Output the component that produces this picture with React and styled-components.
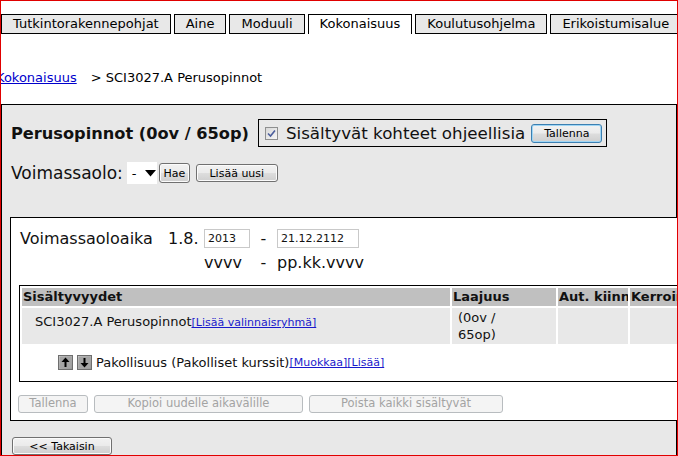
import React from "react";
import styled, { createGlobalStyle } from "styled-components";

const GlobalStyle = createGlobalStyle`
  html, body {
    margin: 0;
    padding: 0;
    background: #fff;
  }
  body {
    font-family: "DejaVu Sans", Verdana, sans-serif;
    color: #000;
  }
  * {
    box-sizing: border-box;
  }
`;

const tabs = [
  "Tutkintorakennepohjat",
  "Aine",
  "Moduuli",
  "Kokonaisuus",
  "Koulutusohjelma",
  "Erikoistumisalue",
];

const Frame = styled.div`
  width: 678px;
  height: 456px;
  border: 1px solid #e00000;
  overflow: hidden;
  background: #fff;
`;

const TabBar = styled.div`
  display: flex;
  gap: 3px;
  margin-top: 13px;
  white-space: nowrap;
`;

const Tab = styled.div`
  flex: none;
  height: 20px;
  padding: 0 11px;
  border: 1px solid #000;
  border-bottom: ${(p) => (p.$active ? "none" : "1px solid #000")};
  background: ${(p) => (p.$active ? "#fff" : "#e8e8e8")};
  font-size: 13px;
  line-height: 18px;
`;

const Breadcrumb = styled.div`
  margin: 36px 0 0 -5px;
  font-size: 13px;
  line-height: 16px;
  white-space: nowrap;
`;

const CrumbLink = styled.a`
  color: #0000cc;
  text-decoration: underline;
`;

const CrumbCurrent = styled.span`
  margin-left: 14px;
`;

const Panel = styled.div`
  margin-top: 18px;
  height: 420px;
  border: 1px solid #000;
  background: #e8e8e8;
  padding: 14px 0 0 8px;
`;

const TitleRow = styled.div`
  display: flex;
  align-items: center;
  gap: 9px;
  padding-left: 1px;
  white-space: nowrap;
`;

const Title = styled.div`
  font-size: 16.2px;
  font-weight: bold;
  color: #111;
`;

const OptionBox = styled.div`
  display: flex;
  align-items: center;
  height: 28px;
  border: 1px solid #000;
  padding: 0 4px 0 6px;
`;

const CheckBox = styled.span`
  display: inline-flex;
  width: 13px;
  height: 13px;
  margin-right: 8px;
  border: 1px solid #8e8f8f;
  background: linear-gradient(135deg, #d8d8d8, #f6f6f6);
  align-items: center;
  justify-content: center;
`;

const OptionLabel = styled.span`
  font-size: 16.7px;
  color: #111;
  margin-right: 6px;
`;

const Button = styled.button`
  width: ${(p) => p.$w}px;
  height: ${(p) => p.$h || 18}px;
  margin: 0;
  padding: 0;
  font-family: "DejaVu Sans", Verdana, sans-serif;
  font-size: ${(p) => p.$size || 11}px;
  color: #000;
  border: 1px solid ${(p) => (p.$focus ? "#3c7fb1" : "#707070")};
  border-radius: 3px;
  box-shadow: ${(p) =>
    p.$focus ? "inset 0 0 0 1px #9fd6f5" : "inset 0 0 0 1px #fbfbfb"};
  background: linear-gradient(
    #f2f2f2 0%,
    #ebebeb 48%,
    #dddddd 52%,
    #cfcfcf 100%
  );
  line-height: 1;
`;

const DisabledButton = styled.button`
  width: ${(p) => p.$w}px;
  height: 18px;
  margin: 0;
  padding: 0;
  font-family: "DejaVu Sans", Verdana, sans-serif;
  font-size: 11.5px;
  color: #a3a3a3;
  border: 1px solid #b8bcbf;
  border-radius: 3px;
  background: #f4f4f4;
  line-height: 1;
`;

const FilterRow = styled.div`
  display: flex;
  align-items: center;
  margin-top: 15px;
  padding-left: 1px;
  height: 22px;
`;

const FilterLabel = styled.span`
  font-size: 17px;
  color: #111;
  margin-right: 4px;
`;

const Select = styled.div`
  display: flex;
  align-items: center;
  justify-content: space-between;
  width: 30px;
  height: 22px;
  background: #fff;
  padding: 0 1px 0 5px;
  font-size: 13px;
  margin-right: 2px;
`;

const PeriodBox = styled.div`
  margin-top: 33px;
  width: 720px;
  border: 1px solid #000;
  background: #fff;
  padding: 8px 0 7px 8px;
`;

const PeriodGrid = styled.div`
  display: grid;
  grid-template-columns: 148px 36px 46px 27px 82px;
  grid-template-rows: 24px 24px;
  align-items: center;
  padding-left: 1px;
  font-size: 16px;
  color: #111;
  white-space: nowrap;
`;

const Dash = styled.span`
  text-align: center;
`;

const DateInput = styled.div`
  height: 19px;
  border: 1px solid #c9c9c9;
  background: #fff;
  font-size: 11px;
  line-height: 17px;
  padding-left: 3px;
`;

const Table = styled.table`
  margin-top: 11px;
  border: 1px solid #000;
  border-collapse: separate;
  border-spacing: 2px;
  table-layout: fixed;
  width: 694px;
  font-size: 13px;
  color: #111;
`;

const HeadCell = styled.th`
  width: ${(p) => p.$w}px;
  height: 18px;
  padding: 0 0 0 1px;
  background: #c0c0c0;
  font-weight: bold;
  text-align: left;
  line-height: 18px;
  white-space: nowrap;
  overflow: hidden;
`;

const DataCell = styled.td`
  height: 36px;
  background: #e8e8e8;
  vertical-align: middle;
  padding: ${(p) => p.$pad || "0"};
  line-height: 17px;
  white-space: nowrap;
`;

const ChildCell = styled.td`
  height: 33px;
  padding: 0 0 0 36px;
  vertical-align: middle;
`;

const ChildRow = styled.div`
  display: flex;
  align-items: center;
  white-space: nowrap;
`;

const ArrowButton = styled.span`
  display: inline-flex;
  width: 15px;
  height: 15px;
  margin-right: 4px;
`;

const SmallLink = styled.a`
  font-size: 11px;
  color: #1a1acc;
  text-decoration: underline;
`;

const ActionRow = styled.div`
  display: flex;
  gap: 6px;
  margin: 13px 0 0 -1px;
`;

const BackButton = styled(Button)`
  margin: 16px 0 0 2px;
`;

const Arrow = ({ down }) => (
  <ArrowButton>
    <svg width="15" height="15" viewBox="0 0 15 15">
      <defs>
        <linearGradient id={down ? "ag-d" : "ag-u"} x1="0" y1="0" x2="1" y2="1">
          <stop offset="0" stopColor="#d6d6d6" />
          <stop offset="1" stopColor="#8c8c8c" />
        </linearGradient>
      </defs>
      <rect x="0.5" y="0.5" width="14" height="14" fill={`url(#${down ? "ag-d" : "ag-u"})`} stroke="#6e6e6e" />
      <rect x="1.5" y="1.5" width="12" height="12" fill="#a4a4a4" />
      {down ? (
        <>
          <rect x="6.5" y="3" width="2" height="6" fill="#000" />
          <polygon points="3.5,8 11.5,8 7.5,12.5" fill="#000" />
        </>
      ) : (
        <>
          <rect x="6.5" y="6" width="2" height="6" fill="#000" />
          <polygon points="3.5,7 11.5,7 7.5,2.5" fill="#000" />
        </>
      )}
    </svg>
  </ArrowButton>
);

export default function App() {
  return (
    <>
      <GlobalStyle />
      <Frame>
        <TabBar>
          {tabs.map((t) => (
            <Tab key={t} $active={t === "Kokonaisuus"}>
              {t}
            </Tab>
          ))}
        </TabBar>

        <Breadcrumb>
          <CrumbLink href="#">Kokonaisuus</CrumbLink>
          <CrumbCurrent>&gt; SCI3027.A Perusopinnot</CrumbCurrent>
        </Breadcrumb>

        <Panel>
          <TitleRow>
            <Title>Perusopinnot (0ov / 65op)</Title>
            <OptionBox>
              <CheckBox>
                <svg width="9" height="9" viewBox="0 0 9 9">
                  <path d="M1 4.5 L3.5 7 L8 1.5" fill="none" stroke="#4b5e9c" strokeWidth="1.6" />
                </svg>
              </CheckBox>
              <OptionLabel>Sisältyvät kohteet ohjeellisia</OptionLabel>
              <Button $w={71} $h={19} $focus>
                Tallenna
              </Button>
            </OptionBox>
          </TitleRow>

          <FilterRow>
            <FilterLabel>Voimassaolo:</FilterLabel>
            <Select>
              <span>-</span>
              <svg width="11" height="7" viewBox="0 0 11 7">
                <polygon points="0,0 11,0 5.5,6.5" fill="#000" />
              </svg>
            </Select>
            <Button $w={31} $h={20}>
              Hae
            </Button>
            <Button $w={82} style={{ marginLeft: 6 }}>
              Lisää uusi
            </Button>
          </FilterRow>

          <PeriodBox>
            <PeriodGrid>
              <span>Voimassaoloaika</span>
              <span>1.8.</span>
              <DateInput>2013</DateInput>
              <Dash>-</Dash>
              <DateInput>21.12.2112</DateInput>
              <span />
              <span />
              <span>vvvv</span>
              <Dash>-</Dash>
              <span>pp.kk.vvvv</span>
            </PeriodGrid>

            <Table>
              <thead>
                <tr>
                  <HeadCell $w={428}>Sisältyvyydet</HeadCell>
                  <HeadCell $w={104}>Laajuus</HeadCell>
                  <HeadCell $w={70}>Aut. kiinn</HeadCell>
                  <HeadCell $w={80}>Kerroin</HeadCell>
                </tr>
              </thead>
              <tbody>
                <tr>
                  <DataCell $pad="0 0 8px 13px">
                    SCI3027.A Perusopinnot
                    <SmallLink href="#">[Lisää valinnaisryhmä]</SmallLink>
                  </DataCell>
                  <DataCell $pad="0 0 0 6px">
                    (0ov /
                    <br />
                    65op)
                  </DataCell>
                  <DataCell />
                  <DataCell />
                </tr>
                <tr>
                  <ChildCell colSpan={4}>
                    <ChildRow>
                      <Arrow />
                      <Arrow down />
                      <span>Pakollisuus (Pakolliset kurssit)</span>
                      <SmallLink href="#">[Muokkaa]</SmallLink>
                      <SmallLink href="#">[Lisää]</SmallLink>
                    </ChildRow>
                  </ChildCell>
                </tr>
              </tbody>
            </Table>

            <ActionRow>
              <DisabledButton $w={70} disabled>
                Tallenna
              </DisabledButton>
              <DisabledButton $w={209} disabled>
                Kopioi uudelle aikavälille
              </DisabledButton>
              <DisabledButton $w={194} disabled>
                Poista kaikki sisältyvät
              </DisabledButton>
            </ActionRow>
          </PeriodBox>

          <BackButton $w={100}>&lt;&lt; Takaisin</BackButton>
        </Panel>
      </Frame>
    </>
  );
}
